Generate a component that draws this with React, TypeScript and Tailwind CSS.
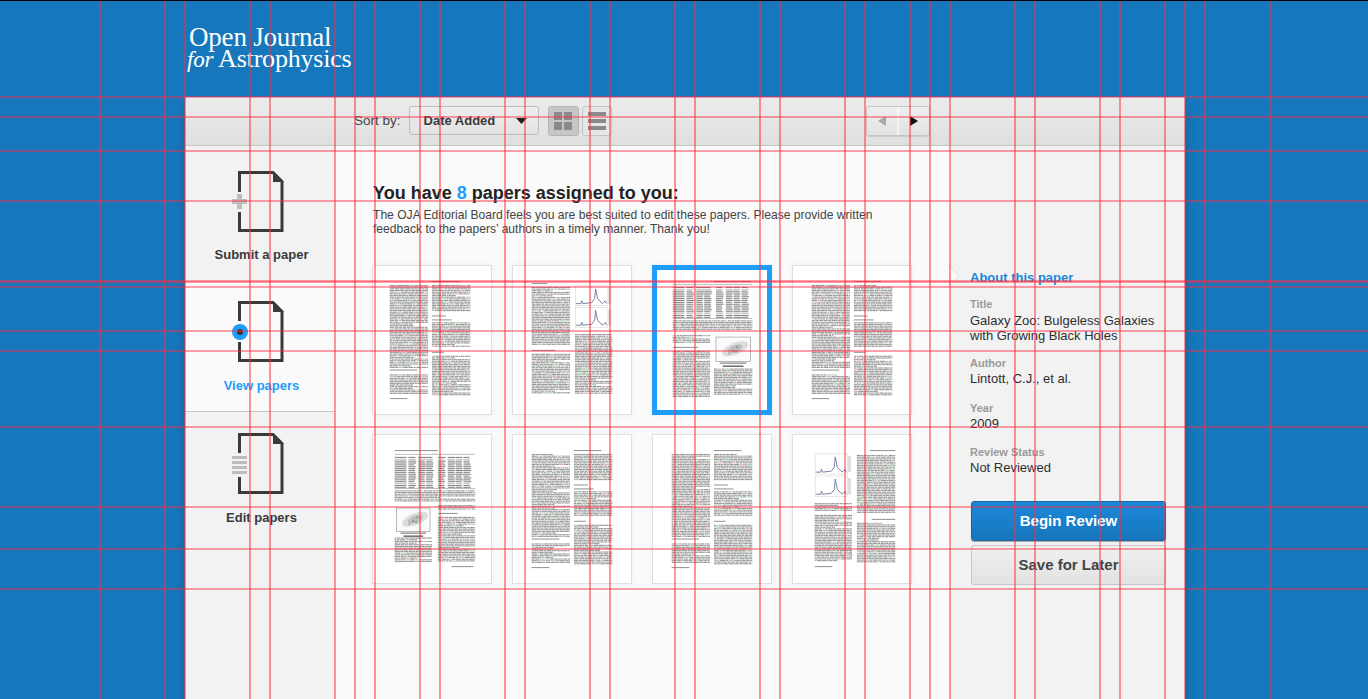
import React from "react";

const sans = "font-['Liberation_Sans',Arial,sans-serif]";

// guide lines laid over the whole mockup
const guideX = [100, 165, 185, 250, 270, 335, 355, 375, 420, 440, 505, 525, 590, 610, 675, 695, 760, 780, 845, 865, 910, 930, 950, 1015, 1035, 1100, 1120, 1165, 1185, 1205, 1270];
const guideY = [97, 117, 151, 201, 281, 282, 287, 331, 351, 427, 507, 549, 589];

type Box = { kind: "text" | "head" | "table" | "spectrum" | "scatter" | "rule"; x: number; y: number; w: number; h: number };

const t = (x: number, y: number, w: number, h: number): Box => ({ kind: "text", x, y, w, h });
const hd = (x: number, y: number, w: number): Box => ({ kind: "head", x, y, w, h: 2 });

const textPage = (a: number): Box[] => [
  hd(a + 43, 15, 28),
  t(a, 19, 39, 85),
  hd(a, 105, 28),
  t(a, 110, 39, 21),
  hd(a, 134, 18),
  t(a + 43, 19, 39, 27),
  hd(a + 43, 50, 14),
  hd(a + 43, 54, 20),
  t(a + 43, 57, 39, 26),
  hd(a + 43, 87, 12),
  t(a + 43, 91, 39, 40),
];

const pages: Box[][] = [
  textPage(17),
  [
    hd(19, 17, 16),
    t(19, 21, 39, 60),
    hd(19, 85, 24),
    t(19, 89, 39, 41),
    { kind: "spectrum", x: 63, y: 20, w: 38, h: 44 },
    t(63, 69, 38, 61),
  ],
  [
    hd(62, 15, 38),
    { kind: "table", x: 20, y: 18, w: 81, h: 35 },
    t(20, 55, 81, 10),
    t(20, 70, 38, 8),
    hd(20, 82, 26),
    t(20, 86, 38, 47),
    { kind: "scatter", x: 62, y: 70, w: 39, h: 31 },
    t(62, 104, 39, 27),
  ],
  textPage(19),
  [
    hd(22, 15, 44),
    { kind: "table", x: 22, y: 19, w: 82, h: 35 },
    t(22, 56, 82, 12),
    { kind: "scatter", x: 22, y: 72, w: 38, h: 30 },
    t(22, 104, 38, 25),
    t(66, 71, 38, 5),
    hd(66, 79, 20),
    t(66, 83, 38, 46),
    hd(80, 133, 22),
  ],
  textPage(19),
  textPage(19),
  [
    hd(78, 15, 26),
    { kind: "spectrum", x: 22, y: 19, w: 38, h: 45 },
    t(22, 69, 38, 8),
    t(22, 81, 38, 48),
    t(65, 20, 39, 59),
    hd(80, 85, 24),
    t(65, 89, 39, 40),
    hd(22, 133, 18),
  ],
];

// small seeded generator so the fake page text stays the same on each load
const makeRand = (seed: number) => {
  let s = seed;
  return () => {
    s = (s * 9301 + 49297) % 233280;
    return s / 233280;
  };
};

const TextLines = ({ box, rand }: { box: Box; rand: () => number }) => {
  const rows: React.ReactNode[] = [];
  const count = Math.round(box.h / 1.7);
  for (let i = 0; i < count; i++) {
    const y = box.y + i * 1.7;
    const stop = box.x + box.w;
    let x = box.x;
    const short = rand() > 0.9 ? box.w * 0.45 : 0;
    while (x < stop - short) {
      const len = 1.6 + rand() * 4;
      const r = rand();
      const fill = r > 0.98 ? "#d87a7a" : r > 0.92 ? "#6fae6f" : "#555555";
      rows.push(<rect key={`${i}-${x}`} x={x} y={y} width={Math.min(len, stop - x)} height={1.15} fill={fill} />);
      x += len + 0.5;
    }
  }
  return <g opacity={0.6}>{rows}</g>;
};

const Table = ({ box, rand }: { box: Box; rand: () => number }) => {
  const rows: React.ReactNode[] = [];
  const cols = [0, 14, 24, 32, 44, 54, 62, 70];
  for (let i = 0; i < 17; i++) {
    cols.forEach((c, j) => {
      rows.push(<rect key={`${i}-${j}`} x={box.x + c} y={box.y + 3 + i * 1.9} width={j === 0 ? 12 : 6 + rand() * 2} height={1.1} fill="#555555" opacity={i === 1 || i === 14 ? 0.35 : 0.7} />);
    });
  }
  return (
    <g>
      <rect x={box.x} y={box.y} width={box.w} height={0.5} fill="#777777" />
      <rect x={box.x} y={box.y + box.h} width={box.w} height={0.5} fill="#777777" />
      {rows}
    </g>
  );
};

const Spectrum = ({ box }: { box: Box }) => {
  const half = box.h / 2;
  const panel = (y: number) => {
    const base = y + half - 4;
    return (
      <g key={y}>
        <rect x={box.x + 0.5} y={y} width={box.w - 5} height={half - 2} fill="none" stroke="#cccccc" strokeWidth={0.5} />
        <path d={`M${box.x + 1} ${base} L${box.x + 6} ${base} L${box.x + 7} ${base - 3} L${box.x + 8} ${base} L${box.x + 17} ${base - 1} L${box.x + 20} ${base - 5} L${box.x + 21} ${y + 3} L${box.x + 23} ${base - 5} L${box.x + 28} ${base} L${box.x + 31} ${base - 3} L${box.x + 32} ${base}`} fill="none" stroke="#6a7198" strokeWidth={0.9} />
        <rect x={box.x + box.w - 4} y={y + 2} width={3} height={half - 6} fill="#bbbbbb" opacity={0.5} />
      </g>
    );
  };
  return <g>{[box.y, box.y + half].map(panel)}</g>;
};

const Scatter = ({ box }: { box: Box }) => {
  const cx = box.x + box.w * 0.55;
  const cy = box.y + box.h * 0.45;
  return (
    <g>
      <rect x={box.x + 2} y={box.y + 2} width={box.w - 4} height={box.h - 6} fill="#fafafa" stroke="#999999" strokeWidth={0.7} />
      <ellipse cx={cx} cy={cy} rx={14} ry={6} transform={`rotate(-22 ${cx} ${cy})`} fill="#dcdcdc" />
      <ellipse cx={cx} cy={cy} rx={8} ry={3.5} transform={`rotate(-22 ${cx} ${cy})`} fill="#bdbdbd" />
      <circle cx={cx - 2} cy={cy + 2} r={1} fill="#5fa85f" />
      <circle cx={cx + 2} cy={cy - 2} r={1} fill="#5fa85f" />
      <circle cx={cx + 1} cy={cy + 3} r={1} fill="#5fa85f" />
      <circle cx={cx - 6} cy={cy + 5} r={0.8} fill="#5fa85f" />
      <rect x={box.x + 6} y={box.y + box.h - 3} width={box.w - 12} height={1} fill="#666666" />
      <rect x={box.x + 9} y={box.y + box.h} width={box.w - 18} height={1.2} fill="#444444" />
    </g>
  );
};

const PageDrawing = ({ boxes, seed }: { boxes: Box[]; seed: number }) => {
  const rand = makeRand(seed);
  return (
    <svg viewBox="0 0 120 150" className="block h-full w-full blur-[0.45px]">
      {boxes.map((b, i) => {
        if (b.kind === "text") return <TextLines key={i} box={b} rand={rand} />;
        if (b.kind === "table") return <Table key={i} box={b} rand={rand} />;
        if (b.kind === "spectrum") return <Spectrum key={i} box={b} />;
        if (b.kind === "scatter") return <Scatter key={i} box={b} />;
        return <rect key={i} x={b.x} y={b.y} width={b.w} height={1.1} fill="#555555" opacity={0.6} />;
      })}
    </svg>
  );
};

const DocIcon = ({ children, gapTop, gapBottom }: { children: React.ReactNode; gapTop: number; gapBottom: number }) => (
  <svg width="52" height="61" viewBox="0 0 52 61" className="ml-[47px] block">
    <path d={`M7.5 ${gapTop} V1.5 H41 L50 10.5 V59.5 H7.5 V${gapBottom}`} fill="none" stroke="#3a3a3a" strokeWidth="3" />
    <path d="M41 0 L52 11 H41 Z" fill="#3a3a3a" />
    {children}
  </svg>
);

const NavLabel = ({ text, active, className }: { text: string; active?: boolean; className: string }) => (
  <div className={`${className} pl-[3px] text-center text-[13px] leading-4 font-bold ${active ? "text-[#1e9dfb]" : "text-[#3a3a3a]"}`}>{text}</div>
);

const MetaField = ({ label, className, children }: { label: string; className: string; children: React.ReactNode }) => (
  <div className={className}>
    <div className="text-[11px] leading-[14px] font-bold text-[#9a9a9a]">{label}</div>
    <div className="mt-[1px] text-[13px] leading-[15px] text-[#2e2e2e]">{children}</div>
  </div>
);

export default function App() {
  return (
    <div className={`relative h-screen overflow-hidden border-t border-black bg-[#1777bc] ${sans}`}>
      {/* Logo */}
      <div className="h-24 pt-[26px] pl-[189px] font-['Liberation_Serif','Times_New_Roman',serif] text-[27px] leading-[21px] tracking-[-0.2px] text-white">
        <div>Open Journal</div>
        <div className="-ml-[2px] text-[26px]">
          <i className="text-[23px]">for</i> Astrophysics
        </div>
      </div>

      <div className="ml-[185px] flex h-[640px] w-[1000px] flex-col rounded-t-[2px] bg-[#f2f2f2] shadow-[0_12px_12px_rgba(0,0,0,0.22)]">
        {/* Toolbar */}
        <div className="flex h-[49px] shrink-0 items-start border-b border-[#c4c4c4] bg-gradient-to-b from-[#ececec] to-[#dfdfdf] pt-[9px] pl-[169px]">
          <span className="mt-[7px] text-[13.5px] leading-4 text-[#444]">Sort by:</span>
          <div className="ml-[8px] flex h-[29px] w-[130px] items-center rounded-[3px] border border-[#bcbcbc] bg-gradient-to-b from-[#eeeeee] to-[#e2e2e2] pr-[11px] pl-[14px]">
            <span className="flex-1 text-[13px] font-bold text-[#3a3a3a]">Date Added</span>
            <svg width="11" height="6" viewBox="0 0 11 6">
              <path d="M0 0 H11 L5.5 6 Z" fill="#222" />
            </svg>
          </div>
          <div className="ml-[9px] flex h-[30px] w-[31px] items-center justify-center rounded-[3px] border border-[#b5b5b5] bg-[#c6c6c6]">
            <svg width="18" height="18" viewBox="0 0 18 18">
              <path d="M0 0 H8 V8 H0 Z M10 0 H18 V8 H10 Z M0 10 H8 V18 H0 Z M10 10 H18 V18 H10 Z" fill="#8a8a8a" />
            </svg>
          </div>
          <div className="ml-[3px] flex h-[30px] w-[30px] items-center justify-center rounded-[3px] border border-[#c4c4c4] bg-[#e6e6e6]">
            <svg width="18" height="18" viewBox="0 0 18 18">
              <path d="M0 0 H18 V4 H0 Z M0 7 H18 V11 H0 Z M0 14 H18 V18 H0 Z" fill="#8a8a8a" />
            </svg>
          </div>
          <div className="ml-[254px] flex h-[30px] w-[64px] items-center rounded-[3px] border border-[#c4c4c4] bg-gradient-to-b from-[#eeeeee] to-[#e2e2e2] shadow-[0_1px_1px_rgba(0,0,0,0.1)]">
            <div className="flex h-full w-[32px] items-center justify-center border-r-2 border-[#f6f6f6]">
              <svg width="8" height="10" viewBox="0 0 8 10">
                <path d="M8 0 V10 L0 5 Z" fill="#a8a8a8" />
              </svg>
            </div>
            <div className="flex h-full flex-1 items-center justify-center">
              <svg width="8" height="10" viewBox="0 0 8 10">
                <path d="M0 0 V10 L8 5 Z" fill="#111" />
              </svg>
            </div>
          </div>
        </div>

        <div className="flex flex-1">
          {/* Left nav */}
          <div className="w-[150px] shrink-0">
            <div className="h-[135px] pt-[25px]">
              <DocIcon gapTop={21} gapBottom={41}>
                <path d="M5 23 H10 V28 H15 V33 H10 V38 H5 V33 H0 V28 H5 Z" fill="#bdbdbd" />
              </DocIcon>
              <NavLabel text="Submit a paper" className="mt-[15px]" />
            </div>
            <div className="h-[131px] border-b border-[#c8c8c8] bg-[#fafafa] pt-[20px]">
              <DocIcon gapTop={20} gapBottom={41}>
                <circle cx="8" cy="31" r="8" fill="#1e9dfb" />
                <circle cx="8" cy="31" r="3" fill="#333" />
              </DocIcon>
              <NavLabel text="View papers" active className="mt-[16px]" />
            </div>
            <div className="pt-[21px]">
              <DocIcon gapTop={20} gapBottom={44}>
                <path d="M0 23 H15 V26 H0 Z M0 28 H15 V31 H0 Z M0 33 H15 V36 H0 Z M0 38 H15 V41 H0 Z" fill="#bdbdbd" />
              </DocIcon>
              <NavLabel text="Edit papers" className="mt-[16px]" />
            </div>
          </div>

          {/* Paper grid */}
          <div className="w-[615px] shrink-0 bg-[#fafafa] pt-[36px] pl-[38px]">
            <h1 className="text-[18px] leading-[22px] font-bold text-[#222]">
              You have <span className="text-[#1e9dfb]">8</span> papers assigned to you:
            </h1>
            <p className="mt-1 w-[520px] text-[12.1px] leading-[14px] text-[#444]">
              The OJA Editorial Board feels you are best suited to edit these papers. Please provide written feedback to the papers’ authors in a timely manner. Thank you!
            </p>
            <div className="mt-[29px] -ml-px grid grid-cols-[repeat(4,120px)] gap-x-5 gap-y-[19px]">
              {pages.map((boxes, i) => (
                <div key={i} className={`h-[150px] w-[120px] border border-[#dfdfdf] bg-white shadow-[0_0_6px_rgba(0,0,0,0.05)] ${i === 2 ? "outline-5 -outline-offset-5 outline-[#1e9dfb]" : ""}`}>
                  <PageDrawing boxes={boxes} seed={i * 137 + 11} />
                </div>
              ))}
            </div>
          </div>

          {/* Paper details */}
          <div className="relative flex-1 pt-[124px] pl-5">
            <svg width="11" height="22" viewBox="0 0 11 22" className="absolute top-[119px] -left-px">
              <path d="M0 0 L10 11 L0 22 Z" fill="#fafafa" stroke="#dddddd" />
            </svg>
            <div className="text-[13px] leading-4 font-bold text-[#1c86d8]">About this paper</div>
            <MetaField label="Title" className="mt-[11px]">
              <div className="pt-px">
                Galaxy Zoo: Bulgeless Galaxies
                <br />
                with Growing Black Holes
              </div>
            </MetaField>
            <MetaField label="Author" className="mt-[13px]">Lintott, C.J., et al.</MetaField>
            <MetaField label="Year" className="mt-[15px]">2009</MetaField>
            <MetaField label="Review Status" className="mt-[14px]">Not Reviewed</MetaField>
            <button className="mt-[26px] ml-px block h-[40px] w-[195px] rounded-[3px] border border-[#1368a8] bg-gradient-to-b from-[#1c88da] to-[#1776bc] text-[15px] font-bold text-white shadow-[0_1px_1px_rgba(0,0,0,0.3)]">
              Begin Review
            </button>
            <button className="mt-[4px] ml-px block h-[40px] w-[195px] rounded-[3px] border border-[#c6c6c6] bg-gradient-to-b from-[#f0f0f0] to-[#e2e2e2] text-[15px] font-bold text-[#444]">
              Save for Later
            </button>
          </div>
        </div>
      </div>

      {/* Red layout guides */}
      <svg className="pointer-events-none absolute -top-px left-0" width="1368" height="700">
        {guideX.map((x) => (
          <rect key={x} x={x - 1} y="1" width="2" height="699" fill="#ff2a40" fillOpacity="0.5" />
        ))}
        {guideY.map((y) => (
          <rect key={y} x="0" y={y - 1} width="1368" height="2" fill="#ff2a40" fillOpacity="0.45" />
        ))}
      </svg>
    </div>
  );
}
